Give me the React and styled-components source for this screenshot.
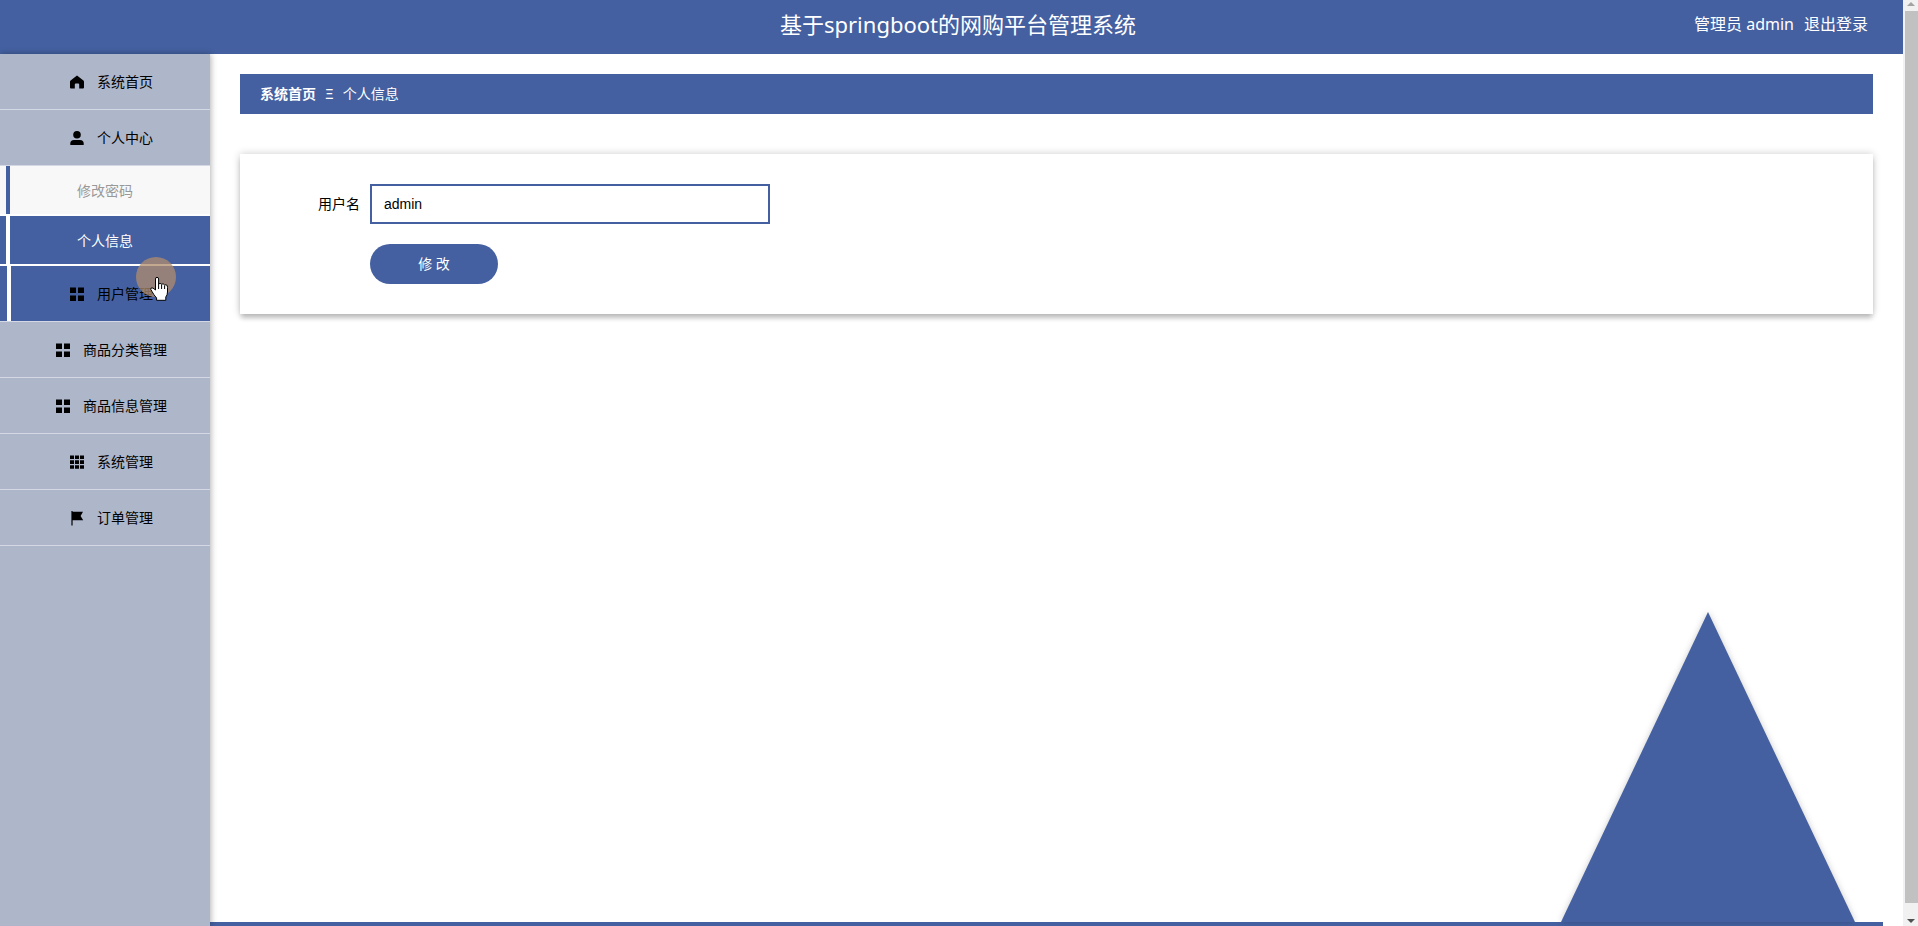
import React from "react";
import styled, { createGlobalStyle, css } from "styled-components";

const blue = "#4460a0";

const GlobalStyle = createGlobalStyle`
  * { box-sizing: border-box; }
  body {
    margin: 0;
    background: #fff;
    color: #000;
    font: 14px/20px "Noto Sans", "Noto Sans CJK SC", sans-serif;
  }
  a { color: inherit; text-decoration: none; }
`;

const Screen = styled.div`
  display: flex;
  height: 100vh;
  overflow: hidden;
`;

const Page = styled.div`
  flex: 1;
  display: flex;
  flex-direction: column;
  min-width: 0;
`;

const Header = styled.header`
  flex: none;
  display: grid;
  grid-template-columns: 1fr auto 1fr;
  align-items: center;
  height: 54px;
  padding: 0 35px 7px 48px;
  background: ${blue};
  color: #fff;
`;

const Title = styled.h1`
  grid-column: 2;
  margin: 0;
  font-size: 22px;
  line-height: 32px;
  font-weight: 400;
`;

const Account = styled.div`
  display: flex;
  justify-content: flex-end;
  gap: 10px;
  font-size: 16px;
  line-height: 24px;
`;

const Body = styled.div`
  flex: 1;
  display: flex;
  min-height: 0;
`;

const Sidebar = styled.nav`
  position: relative;
  flex: none;
  width: 210px;
  background: #aeb6ca;
  box-shadow: 1px 0 6px rgba(0, 0, 0, 0.3);
`;

const bar = (offset, color) => css`
  background-image: linear-gradient(${color}, ${color});
  background-position: ${offset} 0;
  background-size: 4px 100%;
  background-repeat: no-repeat;
`;

const MenuItem = styled.a`
  display: flex;
  align-items: center;
  justify-content: center;
  gap: 13px;
  height: 56px;
  padding-left: 13px;
  border-bottom: 1px solid #d3d8e4;
  ${(p) => p.$hovered && css`
    background-color: ${blue};
    ${bar("7px", "#fff")}
  `}
`;

const SubItem = styled.a`
  display: flex;
  align-items: center;
  justify-content: center;
  height: 50px;
  padding-top: 2px;
  border-bottom: 2px solid #fff;
  background-color: ${(p) => (p.$active ? blue : "#f8f8f8")};
  color: ${(p) => (p.$active ? "#fff" : "#999")};
  ${(p) => bar("6px", p.$active ? "#fff" : blue)}
`;

const Icon = styled.svg`
  flex: none;
  width: 14px;
  height: 14px;
  fill: #000;
`;

const Main = styled.main`
  flex: 1;
  display: flex;
  flex-direction: column;
  margin-right: 20px;
  padding: 20px 10px 0 30px;
  border-bottom: 4px solid ${blue};
`;

const Breadcrumb = styled.div`
  flex: none;
  display: flex;
  align-items: center;
  gap: 9px;
  height: 40px;
  padding: 0 20px;
  background: ${blue};
  color: #fff;
`;

const Card = styled.form`
  display: flex;
  flex-direction: column;
  gap: 20px;
  margin-top: 40px;
  padding: 30px;
  background: #fff;
  box-shadow: 0 0 8px rgba(0, 0, 0, 0.2), 0 5px 5px -1px rgba(0, 0, 0, 0.2);
`;

const Field = styled.div`
  display: flex;
  align-items: center;
  gap: 10px;
`;

const Label = styled.label`
  width: 90px;
  text-align: right;
`;

const Input = styled.input`
  width: 400px;
  height: 40px;
  padding: 0 12px;
  border: 2px solid ${blue};
  background: #fff;
  color: #000;
  font: 14px "Liberation Sans", sans-serif;
`;

const Submit = styled.button`
  width: 128px;
  height: 40px;
  margin-left: 100px;
  border: 0;
  border-radius: 20px;
  background: ${blue};
  color: #fff;
  font: inherit;
`;

const Peak = styled.svg`
  display: block;
  width: 294px;
  height: 310px;
  margin: auto 18px 0 auto;
  fill: ${blue};
  overflow: visible;
  filter: drop-shadow(0 0 3px rgba(0, 0, 0, 0.2));
`;

const Scrollbar = styled.div`
  flex: none;
  display: flex;
  flex-direction: column;
  align-items: center;
  width: 15px;
  padding: 2px 0 3px;
  background: #f1f1f1;
`;

const Arrow = styled.svg`
  display: block;
  width: 8px;
  height: 4px;
  fill: ${(p) => (p.$dim ? "#a3a3a3" : "#505050")};
`;

const Thumb = styled.div`
  align-self: flex-end;
  flex: 1;
  width: 13px;
  margin: 5px 0 16px;
  background: #c1c1c1;
`;

const Pointer = styled.svg`
  position: absolute;
  left: 136px;
  top: 203px;
  width: 40px;
  height: 48px;
  pointer-events: none;
`;

const icons = {
  home: <path d="M7 0.6 L13.4 5.4 Q14 5.9 14 6.8 V12.6 Q14 13.6 13 13.6 H9.2 V9.6 Q9.2 8.6 8.2 8.6 H5.8 Q4.8 8.6 4.8 9.6 V13.6 H1 Q0 13.6 0 12.6 V6.8 Q0 5.9 0.6 5.4 Z" />,
  user: (
    <>
      <circle cx="7" cy="3.8" r="3.8" />
      <path d="M0.3 14 V12.6 Q0.3 9 4 9 H10 Q13.7 9 13.7 12.6 V14 Z" />
    </>
  ),
  menu: <path d="M0 0.5H6V6H0Z M8 0.5H14V6H8Z M0 8.5H6V14H0Z M8 8.5H14V14H8Z" />,
  grid: <path d="M0 0.5H4V4H0Z M5 0.5H9V4H5Z M10 0.5H14V4H10Z M0 5.2H4V9H0Z M5 5.2H9V9H5Z M10 5.2H14V9H10Z M0 10.2H4V13.7H0Z M5 10.2H9V13.7H5Z M10 10.2H14V13.7H10Z" />,
  flag: <path d="M1.4 0H2.6V0.8H13L10.6 5L13.2 9.2H2.6V14.6H1.4Z" />,
};

const before = [
  ["home", "系统首页"],
  ["user", "个人中心"],
];
const after = [
  ["menu", "用户管理", true],
  ["menu", "商品分类管理"],
  ["menu", "商品信息管理"],
  ["grid", "系统管理"],
  ["flag", "订单管理"],
];

const renderItem = ([icon, text, hovered]) => (
  <MenuItem key={text} href="#" $hovered={hovered}>
    <Icon viewBox="0 0 14 14" overflow="visible" aria-hidden="true">{icons[icon]}</Icon>
    {text}
  </MenuItem>
);

export default function App() {
  return (
    <Screen>
      <GlobalStyle />
      <Page>
        <Header>
          <Title>基于springboot的网购平台管理系统</Title>
          <Account>
            <span>管理员 admin</span>
            <a href="#">退出登录</a>
          </Account>
        </Header>
        <Body>
          <Sidebar>
            {before.map(renderItem)}
            <SubItem href="#">修改密码</SubItem>
            <SubItem href="#" $active>个人信息</SubItem>
            {after.map(renderItem)}
            <Pointer viewBox="0 0 40 48" aria-hidden="true">
              <circle cx="20" cy="20" r="20" fill="#b08c6c" fillOpacity="0.75" />
              <path
                d="M19.5 22 Q19.5 20.3 21 20.3 Q22.6 20.3 22.6 22 V27 Q24 25.6 25.6 27.2 Q27.2 26 28.6 28 Q31.5 27 31.5 30.5 V35 Q31.5 38 29.8 40 V43.3 H20.6 V41 Q17.5 37.5 16 34.5 Q14 32 15 31 Q16.6 30 19.5 33 Z"
                fill="#fff"
                stroke="#000"
              />
              <path d="M22.6 27V32 M25.6 27.5V32 M28.6 28.5V32" stroke="#000" fill="none" />
            </Pointer>
          </Sidebar>
          <Main>
            <Breadcrumb>
              <b>系统首页</b>
              <span>Ξ</span>
              <span>个人信息</span>
            </Breadcrumb>
            <Card onSubmit={(e) => e.preventDefault()}>
              <Field>
                <Label htmlFor="username">用户名</Label>
                <Input id="username" defaultValue="admin" />
              </Field>
              <Submit type="submit">修 改</Submit>
            </Card>
            <Peak viewBox="0 0 294 310" aria-hidden="true">
              <path d="M147 0 L294 310 H0 Z" />
            </Peak>
          </Main>
        </Body>
      </Page>
      <Scrollbar aria-hidden="true">
        <Arrow $dim viewBox="0 0 8 4"><path d="M0 4 L4 0 L8 4Z" /></Arrow>
        <Thumb />
        <Arrow viewBox="0 0 8 4"><path d="M0 0 L4 4 L8 0Z" /></Arrow>
      </Scrollbar>
    </Screen>
  );
}
